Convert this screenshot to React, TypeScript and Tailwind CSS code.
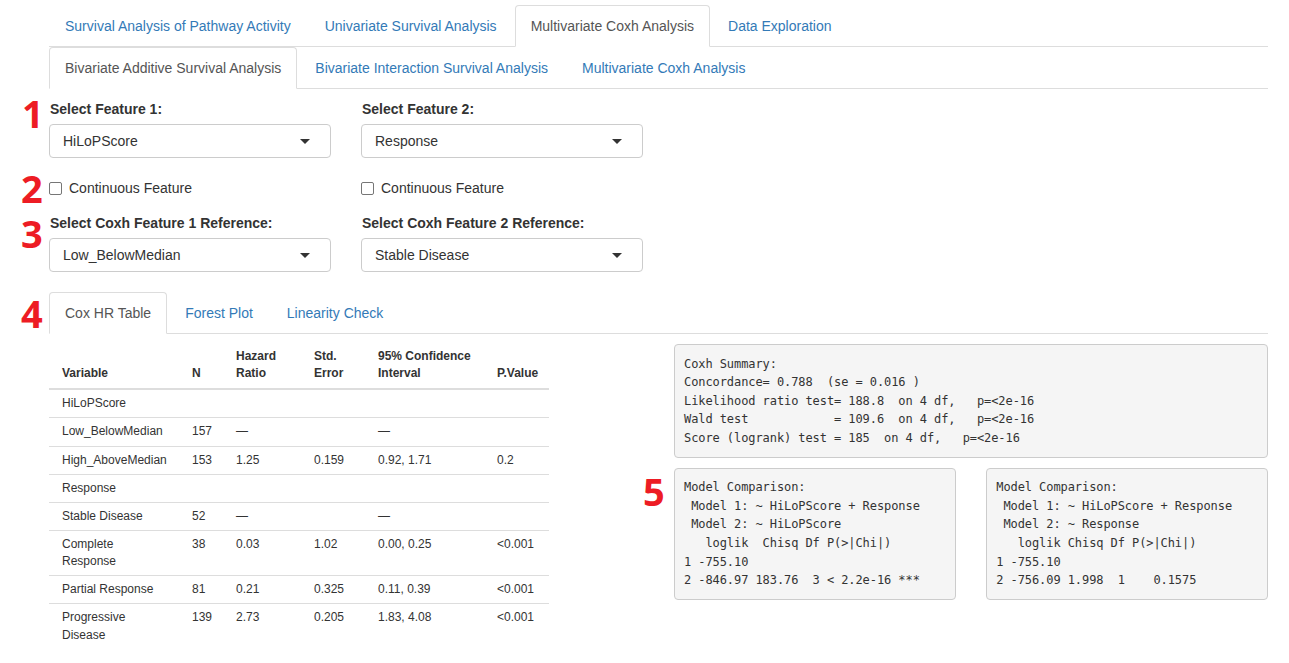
import React from 'react'

const topTabs = ['Survival Analysis of Pathway Activity', 'Univariate Survival Analysis', 'Multivariate Coxh Analysis', 'Data Exploration']
const subTabs = ['Bivariate Additive Survival Analysis', 'Bivariate Interaction Survival Analysis', 'Multivariate Coxh Analysis']
const resultTabs = ['Cox HR Table', 'Forest Plot', 'Linearity Check']

const rows: { label: string; n?: string; hr?: string; se?: string; ci?: string; p?: string }[] = [
  { label: 'HiLoPScore' },
  { label: 'Low_BelowMedian', n: '157', hr: '—', se: '', ci: '—', p: '' },
  { label: 'High_AboveMedian', n: '153', hr: '1.25', se: '0.159', ci: '0.92, 1.71', p: '0.2' },
  { label: 'Response' },
  { label: 'Stable Disease', n: '52', hr: '—', se: '', ci: '—', p: '' },
  { label: 'Complete Response', n: '38', hr: '0.03', se: '1.02', ci: '0.00, 0.25', p: '<0.001' },
  { label: 'Partial Response', n: '81', hr: '0.21', se: '0.325', ci: '0.11, 0.39', p: '<0.001' },
  { label: 'Progressive Disease', n: '139', hr: '2.73', se: '0.205', ci: '1.83, 4.08', p: '<0.001' },
]

const coxhSummary = `Coxh Summary:
Concordance= 0.788  (se = 0.016 )
Likelihood ratio test= 188.8  on 4 df,   p=<2e-16
Wald test            = 109.6  on 4 df,   p=<2e-16
Score (logrank) test = 185  on 4 df,   p=<2e-16`

const compare1 = `Model Comparison:
 Model 1: ~ HiLoPScore + Response
 Model 2: ~ HiLoPScore
   loglik  Chisq Df P(>|Chi|)
1 -755.10
2 -846.97 183.76  3 < 2.2e-16 ***`

const compare2 = `Model Comparison:
 Model 1: ~ HiLoPScore + Response
 Model 2: ~ Response
   loglik Chisq Df P(>|Chi|)
1 -755.10
2 -756.09 1.998  1    0.1575`

function Tabs({ items, active }: { items: string[]; active: number }) {
  return (
    <ul className="flex border-b border-[#ddd]">
      {items.map((t, i) => (
        <li key={t} className="-mb-px mr-[2px]">
          <a className={`block px-[15px] py-[10px] leading-[20px] border rounded-t-[4px] ${
            i === active ? 'bg-white border-[#ddd] border-b-transparent text-[#555]' : 'border-transparent text-[#337ab7]'
          }`}>{t}</a>
        </li>
      ))}
    </ul>
  )
}

function SelectBox({ label, value }: { label: string; value: string }) {
  return (
    <div>
      <label className="block font-bold leading-[20px] mb-[5px] pl-px">{label}</label>
      <div className="h-[34px] border border-[#ccc] rounded-[4px] bg-white flex items-center justify-between pl-[13px] pr-[20px]">
        <span>{value}</span>
        <svg width="10" height="5" viewBox="0 0 10 5"><path d="M0 0h10L5 5z" fill="#333" /></svg>
      </div>
    </div>
  )
}

function Check() {
  return (
    <div className="flex items-center h-[20px] leading-[20px]">
      <span className="w-[13px] h-[13px] border border-[#767676] rounded-[2px] bg-white" />
      <span className="ml-[7px]">Continuous Feature</span>
    </div>
  )
}

function Num({ n, className }: { n: string; className: string }) {
  return (
    <div className={`absolute text-[38px] leading-[30px] font-bold text-[#ed1c24] font-['Noto_Sans',sans-serif] ${className}`}>{n}</div>
  )
}

const pre = "bg-[#f5f5f5] border border-[#ccc] rounded-[4px] p-[9.5px] whitespace-pre font-['DejaVu_Sans_Mono',monospace] text-[12px] leading-[18.57px] tracking-[-0.08px] text-[#333]"

export default function App() {
  return (
    <div className="relative min-h-[663px] bg-white text-[#333] text-[14px] font-['Liberation_Sans',Arial,sans-serif] pl-[49px] pr-[21px] pt-[5px]">
      <Num n="1" className="left-[22px] top-[98px]" />
      <Num n="2" className="left-[21px] top-[173px]" />
      <Num n="3" className="left-[21px] top-[218px]" />
      <Num n="4" className="left-[21px] top-[298px]" />
      <Num n="5" className="left-[643px] top-[476px]" />

      <Tabs items={topTabs} active={2} />
      <Tabs items={subTabs} active={0} />

      <div className="grid grid-cols-[282px_282px] gap-x-[30px] pt-[10px]">
        <div>
          <SelectBox label="Select Feature 1:" value="HiLoPScore" />
          <div className="mt-[20px]"><Check /></div>
          <div className="mt-[15px]"><SelectBox label="Select Coxh Feature 1 Reference:" value="Low_BelowMedian" /></div>
        </div>
        <div>
          <SelectBox label="Select Feature 2:" value="Response" />
          <div className="mt-[20px]"><Check /></div>
          <div className="mt-[15px]"><SelectBox label="Select Coxh Feature 2 Reference:" value="Stable Disease" /></div>
        </div>
      </div>

      <div className="mt-[20px]">
        <Tabs items={resultTabs} active={0} />
      </div>

      <div className="grid grid-cols-2 gap-x-[30px]">
        <div className="pt-[9px]">
          <table className="table-fixed w-[500px] border-collapse text-[12px] leading-[17.14px]">
            <colgroup>
              <col className="w-[130px]" />
              <col className="w-[44px]" />
              <col className="w-[78px]" />
              <col className="w-[64px]" />
              <col className="w-[119px]" />
              <col className="w-[65px]" />
            </colgroup>
            <thead>
              <tr className="border-b-2 border-[#ddd] align-bottom text-left">
                {['Variable', 'N', 'Hazard Ratio', 'Std. Error', '95% Confidence Interval', 'P.Value'].map(h => (
                  <th key={h} className="font-bold pl-[13px] pr-[12px] pt-[5px] pb-[6px]">{h}</th>
                ))}
              </tr>
            </thead>
            <tbody>
              {rows.map((r, i) => (
                <tr key={r.label} className={`align-top ${i < rows.length - 1 ? 'border-b border-[#ddd]' : ''}`}>
                  <td className="pl-[13px] pr-[12px] py-[5px]">{r.label}</td>
                  <td className="pl-[13px] py-[5px]">{r.n}</td>
                  <td className="pl-[13px] py-[5px]">{r.hr}</td>
                  <td className="pl-[13px] py-[5px]">{r.se}</td>
                  <td className="pl-[13px] py-[5px]">{r.ci}</td>
                  <td className="pl-[13px] py-[5px]">{r.p}</td>
                </tr>
              ))}
            </tbody>
          </table>
        </div>
        <div className="pt-[10px]">
          <div className={pre}>{coxhSummary}</div>
          <div className="grid grid-cols-2 gap-x-[30px] mt-[10px]">
            <div className={pre}>{compare1}</div>
            <div className={pre}>{compare2}</div>
          </div>
        </div>
      </div>
    </div>
  )
}
